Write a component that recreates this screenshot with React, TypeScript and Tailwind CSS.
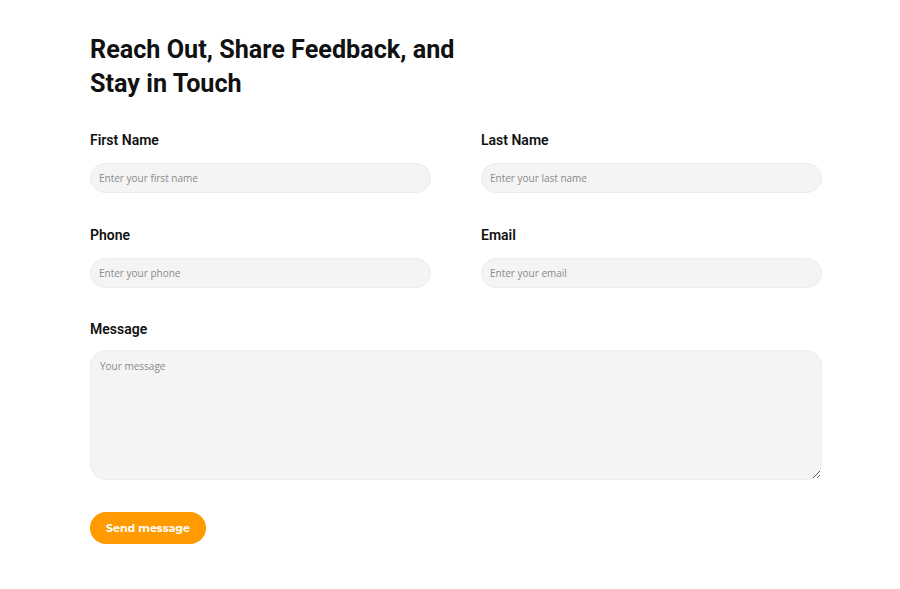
import { useState } from "react";

const inputCls =
  "w-full h-[30px] rounded-full bg-[#f4f4f4] border border-[#ececec] px-[8px] text-[10px] text-[#333] placeholder:text-[#8a8a8a] outline-none [font-family:'Open_Sans',sans-serif]";

const labelCls =
  "block text-[14px] leading-[21px] font-semibold text-[#111] mb-[12px] [font-family:Roboto,sans-serif]";

const Field = ({ label, placeholder }: { label: string; placeholder: string }) => {
  const [value, setValue] = useState("");
  return (
    <div>
      <label className={labelCls}>{label}</label>
      <input
        className={inputCls}
        placeholder={placeholder}
        value={value}
        onChange={(e) => setValue(e.target.value)}
      />
    </div>
  );
};

const App = () => {
  const [message, setMessage] = useState("");

  return (
    <div className="min-h-screen bg-white">
      <div className="w-[732px] ml-[90px] pt-[33px]">
        <h1 className="text-[25.2px] leading-[34px] font-bold text-[#111] [font-family:Roboto,sans-serif] w-[380px]">
          Reach Out, Share Feedback, and Stay in Touch
        </h1>

        <form className="mt-[29px]" onSubmit={(e) => e.preventDefault()}>
          <div className="grid grid-cols-2 gap-x-[50px] gap-y-[32px]">
            <Field label="First Name" placeholder="Enter your first name" />
            <Field label="Last Name" placeholder="Enter your last name" />
            <Field label="Phone" placeholder="Enter your phone" />
            <Field label="Email" placeholder="Enter your email" />
          </div>

          <div className="mt-[31px]">
            <label className={`${labelCls} !mb-[10px]`}>Message</label>
            <textarea
              className="block w-full h-[130px] rounded-[16px] bg-[#f4f4f4] border border-[#ececec] px-[9px] py-[8px] text-[10px] text-[#333] placeholder:text-[#8a8a8a] outline-none [font-family:'Open_Sans',sans-serif]"
              placeholder="Your message"
              value={message}
              onChange={(e) => setMessage(e.target.value)}
            />
          </div>

          <button
            type="submit"
            className="mt-[32px] h-[32px] w-[116px] rounded-full bg-[#ff9a00] text-white text-[11px] font-bold [font-family:Montserrat,'Open_Sans',sans-serif]"
          >
            Send message
          </button>
        </form>
      </div>
    </div>
  );
};

export default App;
